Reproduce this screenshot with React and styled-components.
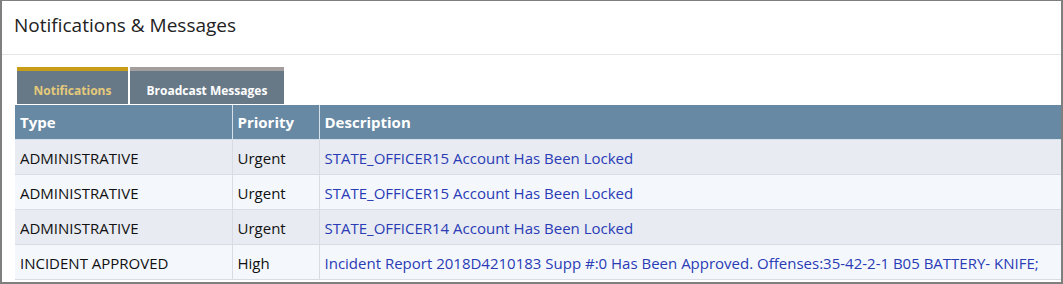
import React, { useState } from 'react';
import styled, { createGlobalStyle } from 'styled-components';

const GlobalStyle = createGlobalStyle`
  html, body {
    margin: 0;
    padding: 0;
    background: #ffffff;
  }
  body {
    font-family: 'Open Sans', 'Noto Sans', sans-serif;
  }
`;

const rows = [
  { type: 'ADMINISTRATIVE', priority: 'Urgent', description: 'STATE_OFFICER15 Account Has Been Locked' },
  { type: 'ADMINISTRATIVE', priority: 'Urgent', description: 'STATE_OFFICER15 Account Has Been Locked' },
  { type: 'ADMINISTRATIVE', priority: 'Urgent', description: 'STATE_OFFICER14 Account Has Been Locked' },
  {
    type: 'INCIDENT APPROVED',
    priority: 'High',
    description:
      'Incident Report 2018D4210183 Supp #:0 Has Been Approved. Offenses:35-42-2-1 B05 BATTERY- KNIFE;',
  },
];

const App = () => {
  // 선택된 탭
  const [activeTab, setActiveTab] = useState('notifications');

  return (
    <>
      <GlobalStyle />
      <Panel>
        <PanelHeader>
          <PanelTitle>Notifications &amp; Messages</PanelTitle>
        </PanelHeader>
        <PanelBody>
          <TabList>
            <Tab
              $active={activeTab === 'notifications'}
              onClick={() => setActiveTab('notifications')}
            >
              Notifications
            </Tab>
            <Tab
              $active={activeTab === 'broadcast'}
              onClick={() => setActiveTab('broadcast')}
            >
              Broadcast Messages
            </Tab>
          </TabList>
          <Table>
            <colgroup>
              <col style={{ width: '217px' }} />
              <col style={{ width: '87px' }} />
              <col />
            </colgroup>
            <thead>
              <tr>
                <HeadCell>Type</HeadCell>
                <HeadCell>Priority</HeadCell>
                <HeadCell>Description</HeadCell>
              </tr>
            </thead>
            <tbody>
              {rows.map((row, i) => (
                <Row key={i} $odd={i % 2 === 0}>
                  <Cell>{row.type}</Cell>
                  <Cell>{row.priority}</Cell>
                  <Cell>
                    <DescLink href="#">{row.description}</DescLink>
                  </Cell>
                </Row>
              ))}
            </tbody>
          </Table>
        </PanelBody>
      </Panel>
    </>
  );
};

export default App;

const Panel = styled.div`
  box-sizing: border-box;
  width: 1063px;
  height: 284px;
  overflow: hidden;
  border-top: 1px solid #7f7f7f;
  border-left: 2px solid #7f7f7f;
  border-right: 2px solid #7f7f7f;
  border-bottom: 2px solid #7f7f7f;
  background: #ffffff;
`;

const PanelHeader = styled.div`
  box-sizing: border-box;
  height: 54px;
  display: flex;
  align-items: center;
  padding: 0 0 6px 12px;
  border-bottom: 1px solid #e6e6e6;
`;

const PanelTitle = styled.h2`
  margin: 0;
  font-size: 19px;
  font-weight: 400;
  color: #222222;
`;

const PanelBody = styled.div`
  padding: 12px 0 0 13px;
`;

const TabList = styled.div`
  display: flex;
  gap: 2px;
  padding-left: 2px;
  margin-bottom: 1px;
`;

const Tab = styled.button`
  box-sizing: border-box;
  height: 37px;
  padding: 5px 16.5px 0;
  border: none;
  border-top: 4px solid ${props => (props.$active ? '#c99c17' : '#a39d9d')};
  background: #677987;
  color: ${props => (props.$active ? '#e4ca7b' : '#ffffff')};
  font-family: 'Open Sans', 'Noto Sans', sans-serif;
  font-size: 12px;
  font-weight: 700;
  cursor: pointer;
`;

const Table = styled.table`
  width: 100%;
  border-collapse: collapse;
  table-layout: fixed;
  font-size: 15px;
  line-height: 20px;
`;

const HeadCell = styled.th`
  box-sizing: border-box;
  height: 34px;
  padding: 1px 5px 0;
  text-align: left;
  background: #6889a4;
  color: #ffffff;
  font-weight: 700;
  font-size: 15px;
  border-left: 1px solid #d6e0e8;
  border-bottom: 1px solid #d6e0e8;

  &:first-child {
    border-left: none;
  }
`;

const Row = styled.tr`
  background: ${props => (props.$odd ? '#e8ebf2' : '#f4f8fd')};
`;

const Cell = styled.td`
  box-sizing: border-box;
  height: 35px;
  padding: 2px 5px 0;
  color: #111111;
  white-space: nowrap;
  overflow: hidden;
  border-left: 1px solid #d9dde3;
  border-bottom: 1px solid #d9dde3;

  &:first-child {
    border-left: none;
  }
`;

const DescLink = styled.a`
  color: #2a3bb5;
  text-decoration: none;
`;
